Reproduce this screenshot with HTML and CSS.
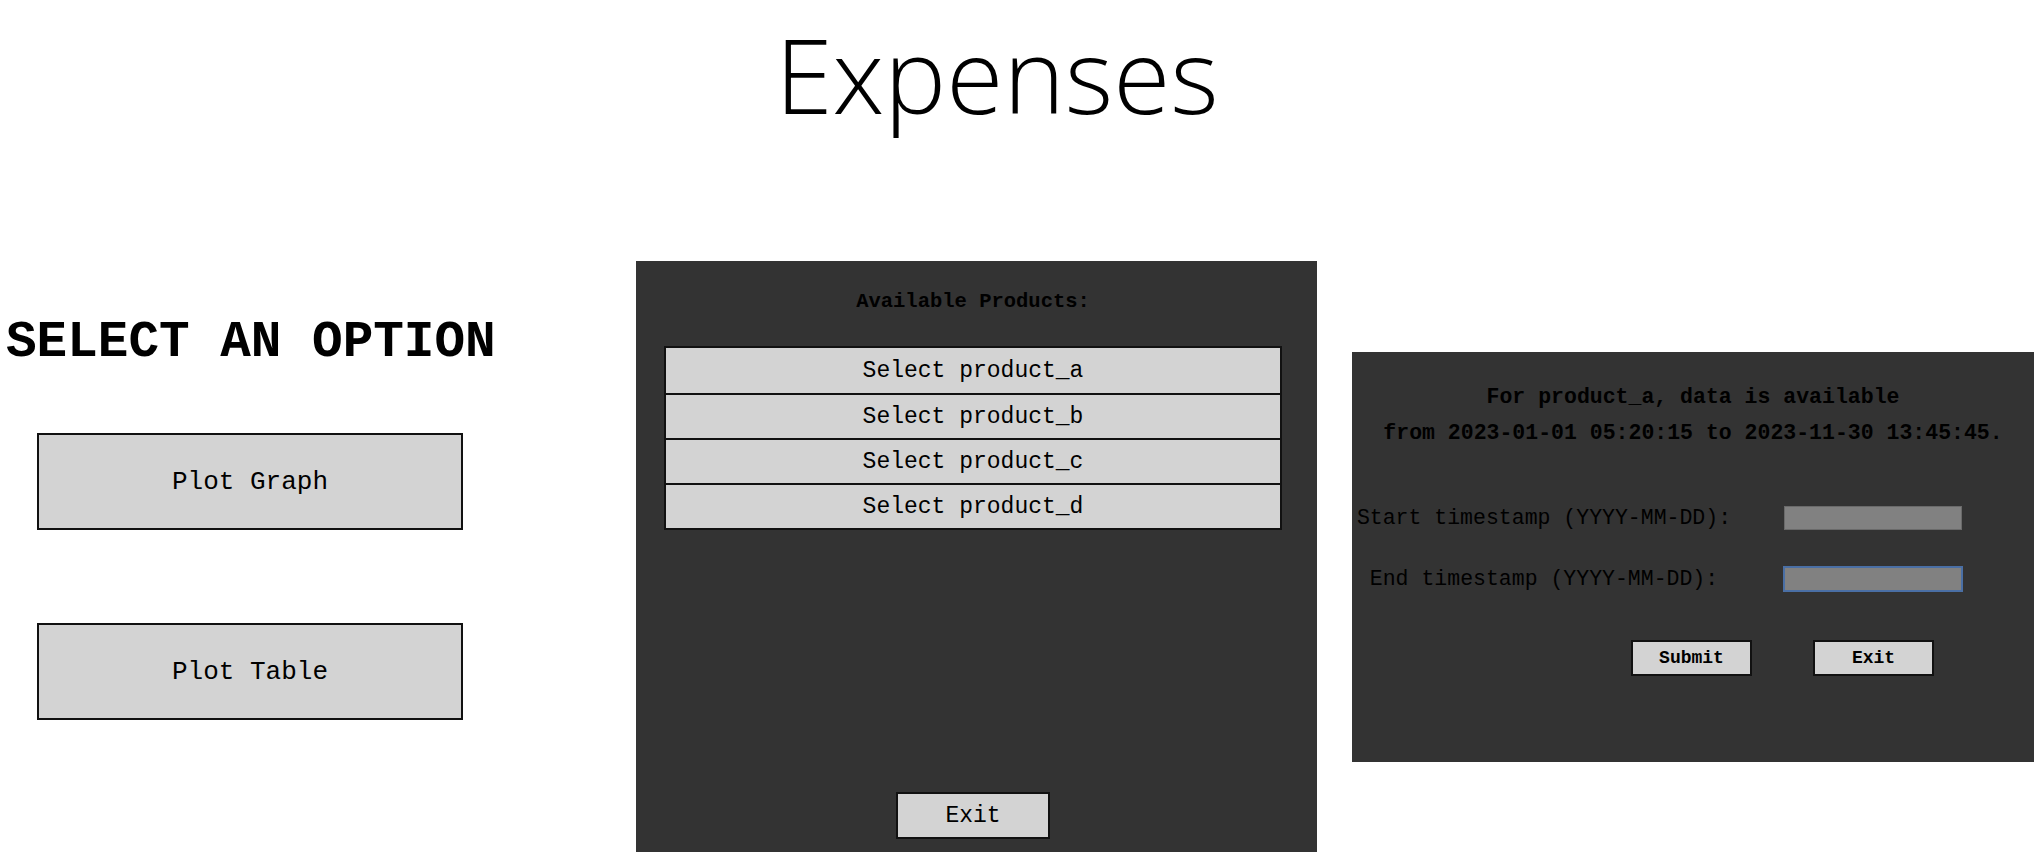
FILE: index.html
```html
<!DOCTYPE html>
<html lang="en">
<head>
    <meta charset="UTF-8">
    <meta name="viewport" content="width=device-width, initial-scale=1.0">
    <title>Expenses</title>
    <link rel="stylesheet" href="styles.css">
</head>
<body>

    <h1 class="page-title">Expenses</h1>

    <div class="main">
        <div class="options">
            <h2 class="options-title">SELECT AN OPTION</h2>
            <button class="option-btn">Plot Graph</button>
            <button class="option-btn">Plot Table</button>
        </div>

        <div class="panel products">
            <div class="products-title">Available Products:</div>
            <div class="product-list">
                <button class="product-item">Select product_a</button>
                <button class="product-item">Select product_b</button>
                <button class="product-item">Select product_c</button>
                <button class="product-item">Select product_d</button>
            </div>
            <button class="exit-btn">Exit</button>
        </div>

        <div class="panel range">
            <div class="range-info">
                For product_a, data is available<br>
                from 2023-01-01 05:20:15 to 2023-11-30 13:45:45.
            </div>
            <form class="range-form" onsubmit="return false">
                <label for="start_ts">Start timestamp (YYYY-MM-DD):</label>
                <input type="text" id="start_ts" autocomplete="off">
                <label for="end_ts">End timestamp (YYYY-MM-DD):</label>
                <input type="text" id="end_ts" class="is-focused" autocomplete="off">
            </form>
            <div class="range-actions">
                <button class="small-btn">Submit</button>
                <button class="small-btn">Exit</button>
            </div>
        </div>
    </div>

</body>
</html>
```

FILE: styles.css
```css
html, body {
    margin: 0;
    padding: 0;
    overflow: hidden;
}
body {
    font-family: "Liberation Mono", "Courier New", monospace;
    background-color: #fff;
    color: #000;
    width: 2034px;
    height: 856px;
}

.page-title {
    font-family: "Open Sans", "Noto Sans", sans-serif;
    font-weight: 300;
    font-size: 104px;
    line-height: 105px;
    text-align: center;
    margin: 21px 40px 0 0;
}

.main {
    display: flex;
    align-items: flex-start;
    margin-top: 135px;
}

/* left column */
.options {
    width: 636px;
    padding-left: 6px;
    box-sizing: border-box;
}
.options-title {
    font-size: 51px;
    font-weight: bold;
    line-height: 51px;
    margin: 56px 0 0 0;
}
.option-btn {
    display: block;
    width: 426px;
    height: 97px;
    margin-left: 31px;
    background-color: #d3d3d3;
    border: 2px solid #111;
    font-family: inherit;
    font-size: 26px;
    color: #000;
    padding: 0;
}
.options-title + .option-btn {
    margin-top: 65px;
}
.option-btn + .option-btn {
    margin-top: 93px;
}

/* dark panels */
.panel {
    background-color: #333;
    box-sizing: border-box;
}

.products {
    width: 681px;
    height: 591px;
    display: flex;
    flex-direction: column;
    align-items: center;
    padding: 29px 37px 13px 30px;
}
.products-title {
    font-size: 20.5px;
    font-weight: bold;
}
.product-list {
    width: 100%;
    margin-top: 33px;
    border: 2px solid #111;
    display: flex;
    flex-direction: column;
}
.product-item {
    height: 45px;
    background-color: #d3d3d3;
    border: none;
    font-family: inherit;
    font-size: 23px;
    color: #000;
    padding: 0;
}
.product-item + .product-item {
    border-top: 2px solid #111;
}
.exit-btn {
    margin-top: auto;
    width: 154px;
    height: 47px;
    background-color: #d3d3d3;
    border: 2px solid #111;
    font-family: inherit;
    font-size: 23px;
    color: #000;
    padding: 0;
}

.range {
    width: 682px;
    height: 410px;
    margin-top: 91px;
    margin-left: 35px;
    padding-top: 27px;
}
.range-info {
    font-size: 21.5px;
    font-weight: bold;
    line-height: 36px;
    text-align: center;
}
.range-form {
    display: grid;
    grid-template-columns: 384px 1fr;
    row-gap: 37px;
    align-items: center;
    margin-top: 55px;
    font-size: 21.5px;
}
.range-form label {
    text-align: center;
}
.range-form input {
    width: 178px;
    height: 24px;
    box-sizing: border-box;
    margin-left: 48px;
    background-color: #818181;
    border: 1px solid #6a6a6a;
    padding: 0 4px;
    outline: none;
}
.range-form input.is-focused {
    outline: 2px solid #4a6fa5;
    outline-offset: -1px;
}
.range-actions {
    display: flex;
    gap: 61px;
    margin-top: 49px;
    padding-left: 279px;
}
.small-btn {
    width: 121px;
    height: 36px;
    background-color: #d3d3d3;
    border: 2px solid #111;
    font-family: inherit;
    font-size: 18px;
    font-weight: bold;
    color: #000;
    padding: 0;
}
```
